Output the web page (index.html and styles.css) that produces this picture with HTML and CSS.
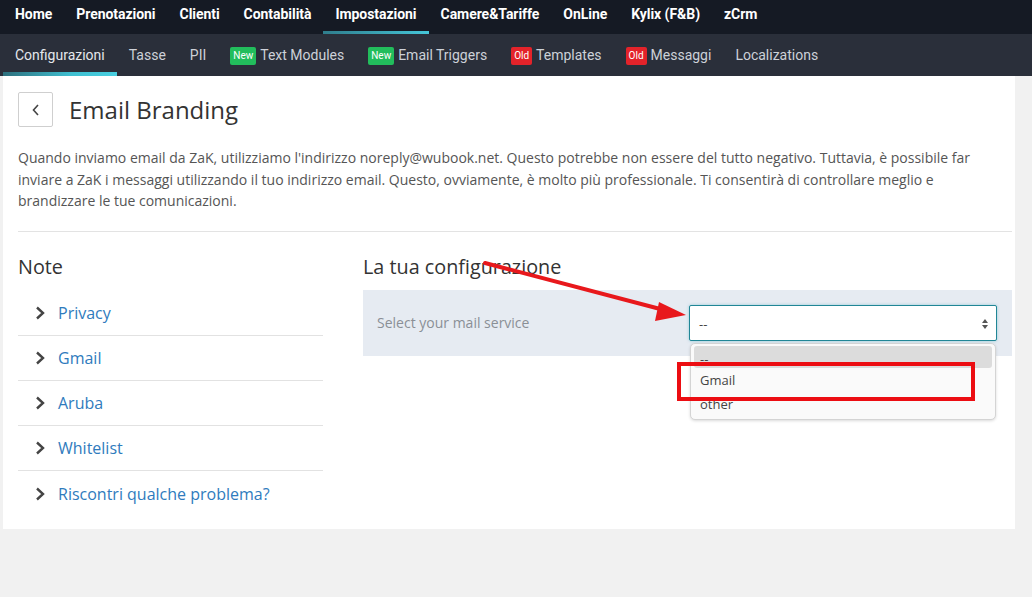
FILE: index.html
```html
<!DOCTYPE html>
<html lang="it">
<head>
<meta charset="utf-8">
<title>Email Branding</title>
<link rel="stylesheet" href="styles.css">
</head>
<body>
<nav class="topnav">
  <a class="tn-item">Home</a>
  <a class="tn-item">Prenotazioni</a>
  <a class="tn-item">Clienti</a>
  <a class="tn-item">Contabilità</a>
  <a class="tn-item active">Impostazioni</a>
  <a class="tn-item">Camere&amp;Tariffe</a>
  <a class="tn-item">OnLine</a>
  <a class="tn-item">Kylix (F&amp;B)</a>
  <a class="tn-item">zCrm</a>
</nav>
<nav class="subnav">
  <a class="sn-item active">Configurazioni</a>
  <a class="sn-item">Tasse</a>
  <a class="sn-item">PII</a>
  <a class="sn-item"><span class="badge new">New</span>Text Modules</a>
  <a class="sn-item"><span class="badge new">New</span>Email Triggers</a>
  <a class="sn-item"><span class="badge old">Old</span>Templates</a>
  <a class="sn-item"><span class="badge old">Old</span>Messaggi</a>
  <a class="sn-item">Localizations</a>
</nav>

<main class="card">
  <div class="title-row">
    <button class="back-btn" type="button">
      <svg width="10" height="14" viewBox="0 0 10 14"><polyline points="7,2 2.5,7 7,12" fill="none" stroke="#444" stroke-width="1.6"/></svg>
    </button>
    <h1 class="title">Email Branding</h1>
  </div>
  <p class="intro">Quando inviamo email da ZaK, utilizziamo l'indirizzo noreply@wubook.net. Questo potrebbe non essere del tutto negativo. Tuttavia, è possibile far inviare a ZaK i messaggi utilizzando il tuo indirizzo email. Questo, ovviamente, è molto più professionale. Ti consentirà di controllare meglio e brandizzare le tue comunicazioni.</p>
  <hr class="sep">
  <div class="cols">
    <section class="notes">
      <h2 class="sec-title">Note</h2>
      <ul class="note-list">
        <li class="note-item"><svg class="chev" width="12" height="16" viewBox="0 0 12 16"><polyline points="3,2.5 9,8 3,13.5" fill="none" stroke="#444" stroke-width="2.4"/></svg><a class="note-link">Privacy</a></li>
        <li class="note-item"><svg class="chev" width="12" height="16" viewBox="0 0 12 16"><polyline points="3,2.5 9,8 3,13.5" fill="none" stroke="#444" stroke-width="2.4"/></svg><a class="note-link">Gmail</a></li>
        <li class="note-item"><svg class="chev" width="12" height="16" viewBox="0 0 12 16"><polyline points="3,2.5 9,8 3,13.5" fill="none" stroke="#444" stroke-width="2.4"/></svg><a class="note-link">Aruba</a></li>
        <li class="note-item"><svg class="chev" width="12" height="16" viewBox="0 0 12 16"><polyline points="3,2.5 9,8 3,13.5" fill="none" stroke="#444" stroke-width="2.4"/></svg><a class="note-link">Whitelist</a></li>
        <li class="note-item"><svg class="chev" width="12" height="16" viewBox="0 0 12 16"><polyline points="3,2.5 9,8 3,13.5" fill="none" stroke="#444" stroke-width="2.4"/></svg><a class="note-link">Riscontri qualche problema?</a></li>
      </ul>
    </section>
    <section class="config">
      <h2 class="sec-title">La tua configurazione</h2>
      <div class="config-box">
        <span class="cfg-label">Select your mail service</span>
        <div class="select">
          <span>--</span>
          <svg width="8" height="12" viewBox="0 0 8 12"><polygon points="4,1 7,5 1,5" fill="#555"/><polygon points="1,7 7,7 4,11" fill="#555"/></svg>
        </div>
        <ul class="dropdown">
          <li class="opt hl">--</li>
          <li class="opt">Gmail</li>
          <li class="opt">other</li>
        </ul>
        <div class="mark"></div>
      </div>
    </section>
  </div>
</main>

<svg class="arrow" width="1032" height="597" viewBox="0 0 1032 597">
  <line x1="485" y1="263" x2="664" y2="310" stroke="#e8181c" stroke-width="4" stroke-linecap="round"/>
  <polygon points="686,315 659,302 655,321" fill="#e8181c"/>
</svg>
</body>
</html>
```

FILE: styles.css
```css
* { box-sizing: border-box; }
html, body { margin: 0; padding: 0; }
body {
  background: #f1f1f1;
  font-family: "Open Sans", "Liberation Sans", sans-serif;
  color: #333;
  position: relative;
  width: 1032px;
  min-height: 597px;
}
ul { list-style: none; margin: 0; padding: 0; }
a { text-decoration: none; }

.topnav {
  display: flex;
  height: 34px;
  background: #151a24;
  padding-left: 3px;
}
.tn-item {
  font-family: Roboto, "Liberation Sans", sans-serif;
  font-weight: 700;
  font-size: 14px;
  letter-spacing: -0.05px;
  color: #fff;
  padding: 0 12px;
  height: 34px;
  line-height: 28px;
}
.tn-item.active {
  background: linear-gradient(90deg, #2f7d8c, #45c6d8) left bottom / 100% 3px no-repeat;
}

.subnav {
  display: flex;
  height: 42px;
  background: #2a2f3a;
  padding-left: 3px;
}
.sn-item {
  font-family: Roboto, "Liberation Sans", sans-serif;
  font-size: 14px;
  color: #cdd1d8;
  padding: 0 12px;
  height: 42px;
  display: flex;
  align-items: center;
}
.sn-item.active {
  color: #e4e7ec;
  background: linear-gradient(90deg, #2d6f7c, #3fbfd0 60%, #48cfe0) left bottom / 100% 4px no-repeat;
}
.badge {
  display: inline-block;
  font-size: 10px;
  line-height: 18px;
  height: 18px;
  padding: 0 3px;
  border-radius: 2px;
  color: #fff;
  margin-right: 4px;
  margin-top: 1px;
}
.badge.new { background: #22bd5c; }
.badge.old { background: #e3232a; padding: 0 3px; }

.card {
  margin: 0 17px 0 3px;
  background: #fff;
  height: 453px;
  padding: 16px 0 0 15px;
}
.title-row {
  display: flex;
  align-items: center;
  gap: 16px;
  height: 35px;
}
.back-btn {
  width: 35px;
  height: 35px;
  border: 1px solid #cfcfcf;
  border-radius: 2px;
  background: #fff;
  display: flex;
  align-items: center;
  justify-content: center;
  padding: 0;
}
.title {
  margin: 0;
  font-size: 24px;
  font-weight: 400;
  color: #333;
  line-height: 32px;
}
.intro {
  margin: 20px 0 0 0;
  width: 994px;
  font-size: 14px;
  line-height: 21.5px;
  color: #555;
}
.sep {
  margin: 19px 0 0 0;
  width: 994px;
  border: 0;
  border-top: 1px solid #e3e3e3;
  height: 0;
}
.cols {
  display: grid;
  grid-template-columns: 305px 649px;
  column-gap: 40px;
  margin-top: 22px;
}
.sec-title {
  margin: 0;
  font-size: 19.8px;
  font-weight: 400;
  line-height: 26px;
  color: #333;
}
.note-list { margin-top: 11px; }
.note-item {
  display: flex;
  align-items: center;
  height: 45px;
  padding-left: 16px;
  border-bottom: 1px solid #e2e2e2;
  padding-top: 1px;
}
.note-item:last-child { border-bottom: 0; }
.chev { margin-right: 12px; flex: none; }
.note-link {
  font-size: 16px;
  color: #2f7bbd;
}
.config-box {
  position: relative;
  margin-top: 10px;
  height: 66px;
  background: #e6ebf2;
  display: flex;
  align-items: center;
  padding: 0 15px 0 14px;
}
.cfg-label {
  flex: 1;
  font-size: 14px;
  color: #8a8f96;
}
.select {
  width: 308px;
  height: 36px;
  background: #fff;
  border: 1px solid #218696;
  box-shadow: 0 0 3px rgba(60, 170, 190, 0.5);
  border-radius: 2px;
  display: flex;
  align-items: center;
  justify-content: space-between;
  padding: 2px 7px 0 9px;
  font-size: 13px;
  color: #444;
}
.dropdown {
  position: absolute;
  left: 327px;
  top: 53px;
  width: 306px;
  height: 77px;
  background: #fafafa;
  border: 1px solid #d4d4d4;
  border-radius: 5px;
  box-shadow: 0 1px 3px rgba(0, 0, 0, 0.15);
  padding: 2px 3px;
}
.opt {
  font-size: 13px;
  color: #444;
  height: 24px;
  line-height: 24px;
  padding-left: 6px;
}
.opt.hl {
  background: #dcdcdc;
  border-radius: 3px;
  height: 22px;
  line-height: 26px;
}
.mark {
  position: absolute;
  left: 314px;
  top: 72px;
  width: 298px;
  height: 39px;
  border: 4px solid #ec0d12;
}
.arrow {
  position: absolute;
  left: 0;
  top: 0;
  pointer-events: none;
}
```
